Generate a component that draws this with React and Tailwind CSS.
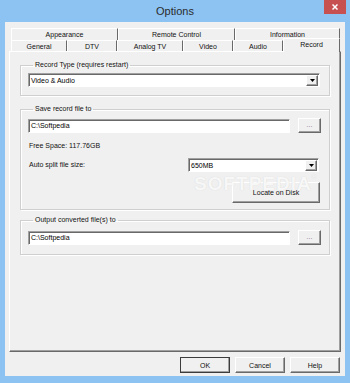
import React from "react";

// raised / sunken 3D looks (classic Windows controls)
const RAISED =
  "bg-[#f0f0f0] border border-t-white border-l-white border-r-[#696969] border-b-[#696969] shadow-[inset_-1px_-1px_0_#a0a0a0]";
const SUNKEN =
  "bg-white border border-t-[#a0a0a0] border-l-[#a0a0a0] border-r-white border-b-white shadow-[inset_1px_1px_0_#696969]";

const TOP_TABS = [
  { label: "Appearance", w: "w-[107px]" },
  { label: "Remote Control", w: "w-[117px]" },
  { label: "Information", w: "w-[105px]" },
];

const BOTTOM_TABS = [
  { label: "General", w: "w-[56px]" },
  { label: "DTV", w: "w-[50px]" },
  { label: "Analog TV", w: "w-[66px]" },
  { label: "Video", w: "w-[50px]" },
  { label: "Audio", w: "w-[50px]" },
];

const Arrow = () => (
  <svg width="5" height="3" viewBox="0 0 5 3">
    <path d="M0 0h5L2.5 3z" fill="#000" />
  </svg>
);

const Combo = ({ value, className }) => (
  <div className={`${SUNKEN} flex h-[14px] items-center ${className}`}>
    <span className="flex-1 pl-[2px] leading-none text-black">{value}</span>
    <div className={`${RAISED} mr-[1px] flex h-[11px] w-[12px] items-center justify-center`}>
      <Arrow />
    </div>
  </div>
);

const PathRow = ({ value }) => (
  <div className="flex items-center gap-[8px]">
    <div className={`${SUNKEN} flex h-[14px] w-[262px] items-center pl-[2px] leading-none text-black`}>
      {value}
    </div>
    <button className={`${RAISED} h-[15px] w-[23px] pb-[3px] text-[7px] leading-none text-[#8a6f93]`}>
      ...
    </button>
  </div>
);

const Group = ({ title, className = "", children }) => (
  <fieldset
    className={`border border-[#cfcfcf] px-[7px] shadow-[inset_1px_1px_0_#fff,1px_1px_0_#fff] ${className}`}
  >
    <legend className="ml-[5px] px-[2px] leading-[10px] text-[#111]">{title}</legend>
    {children}
  </fieldset>
);

export default function App() {
  return (
    <div className="relative flex h-[383px] w-[350px] flex-col overflow-hidden bg-[#8cc3f3] font-['Liberation_Sans',Arial,sans-serif] text-[7px] text-[#111]">
      {/* title bar */}
      <div className="relative flex h-[22px] items-center justify-center">
        <span className="text-[11px] text-[#2b2b2b]">Options</span>
        <div className="absolute right-[4px] top-0 flex h-[14px] w-[22px] items-center justify-center bg-[#c75050]">
          <svg width="6" height="6" viewBox="0 0 6 6">
            <path d="M0.5 0.5l5 5M5.5 0.5l-5 5" stroke="#fff" strokeWidth="1.5" />
          </svg>
        </div>
      </div>

      {/* client area */}
      <div className="mx-[5px] flex h-[354px] flex-col bg-[#f0f0f0] px-[4px]">
        {/* tab rows */}
        <div className="ml-[2px] mt-[6px] flex flex-col">
          <div className="flex h-[12px]">
            {TOP_TABS.map((t) => (
              <div
                key={t.label}
                className={`${t.w} flex items-center justify-center border-l border-r border-t border-l-white border-r-[#696969] border-t-white leading-none`}
              >
                {t.label}
              </div>
            ))}
          </div>
          <div className="relative z-10 flex h-[11px] items-end">
            {BOTTOM_TABS.map((t) => (
              <div
                key={t.label}
                className={`${t.w} flex h-[11px] items-center justify-center border-l border-r border-t border-l-white border-r-[#696969] border-t-white leading-none`}
              >
                {t.label}
              </div>
            ))}
            <div className="-mb-[1px] flex h-[14px] w-[57px] items-start justify-center border-l border-r border-t border-l-white border-r-[#696969] border-t-white bg-[#f0f0f0] pt-[2px] leading-none">
              Record
            </div>
          </div>
        </div>

        {/* tab page */}
        <div className="flex h-[301px] flex-col border border-b-[#696969] border-l-white border-r-[#696969] border-t-white px-[10px] pt-[8px] shadow-[inset_-1px_-1px_0_#a0a0a0]">
          <Group title="Record Type (requires restart)" className="pb-[8px] pr-[9px]">
            <div className="pt-[3px]">
              <Combo value="Video & Audio" className="w-full" />
            </div>
          </Group>

          <Group title="Save record file to" className="mt-[8px] pb-[6px]">
            <div className="pt-[4px]">
              <PathRow value="C:\Softpedia" />
            </div>
            <div className="mt-[8px] pl-[1px] leading-[10px]">Free Space: 117.76GB</div>
            <div className="mt-[7px] flex items-center">
              <span className="w-[160px] pl-[1px]">Auto split file size:</span>
              <Combo value="650MB" className="w-[131px]" />
            </div>
            <div className="mt-[10px] flex justify-end pr-[2px]">
              <button className={`${RAISED} h-[21px] w-[88px] text-[7px] leading-none text-[#111]`}>
                Locate on Disk
              </button>
            </div>
          </Group>

          <Group title="Output converted file(s) to" className="mt-[5px] pb-[9px]">
            <div className="pt-[5px]">
              <PathRow value="C:\Softpedia" />
            </div>
          </Group>
        </div>

        {/* dialog buttons */}
        <div className="mr-[1px] mt-[5px] flex justify-end gap-[5px]">
          <button className={`${RAISED} h-[16px] w-[50px] text-[7px] leading-none outline outline-1 -outline-offset-1 outline-[#3c3c3c]`}>
            OK
          </button>
          <button className={`${RAISED} h-[16px] w-[50px] text-[7px] leading-none`}>Cancel</button>
          <button className={`${RAISED} h-[16px] w-[50px] text-[7px] leading-none`}>Help</button>
        </div>
      </div>

      {/* watermark */}
      <div className="pointer-events-none absolute left-[194px] top-[174px] text-[19px] font-bold leading-none tracking-[1px] text-[#f7f7f7] [text-shadow:0_0_1px_#d2d2d2]">
        SOFTPEDIA<span className="align-top text-[6px]">®</span>
      </div>
    </div>
  );
}
